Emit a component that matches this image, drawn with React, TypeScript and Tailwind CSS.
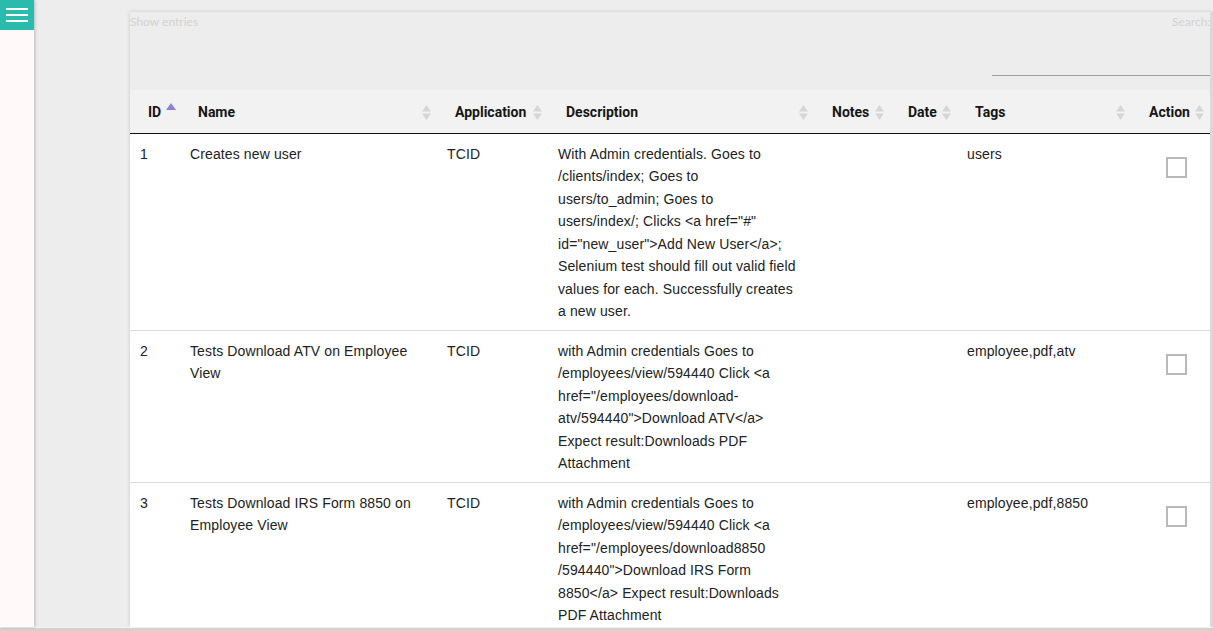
import React from "react";

type Row = {
  id: string;
  name: string[];
  app: string;
  desc: string[];
  tags: string;
};

const rows: Row[] = [
  {
    id: "1",
    name: ["Creates new user"],
    app: "TCID",
    desc: [
      "With Admin credentials. Goes to",
      "/clients/index; Goes to",
      "users/to_admin; Goes to",
      'users/index/; Clicks <a href="#"',
      'id="new_user">Add New User</a>;',
      "Selenium test should fill out valid field",
      "values for each. Successfully creates",
      "a new user.",
    ],
    tags: "users",
  },
  {
    id: "2",
    name: ["Tests Download ATV on Employee", "View"],
    app: "TCID",
    desc: [
      "with Admin credentials Goes to",
      "/employees/view/594440 Click <a",
      'href="/employees/download-',
      'atv/594440">Download ATV</a>',
      "Expect result:Downloads PDF",
      "Attachment",
    ],
    tags: "employee,pdf,atv",
  },
  {
    id: "3",
    name: ["Tests Download IRS Form 8850 on", "Employee View"],
    app: "TCID",
    desc: [
      "with Admin credentials Goes to",
      "/employees/view/594440 Click <a",
      'href="/employees/download8850',
      '/594440">Download IRS Form',
      "8850</a> Expect result:Downloads",
      "PDF Attachment",
    ],
    tags: "employee,pdf,8850",
  },
];

const SortBoth = () => (
  <svg
    width="9"
    height="15"
    viewBox="0 0 9 15"
    className="absolute right-[6px] top-[15px]"
  >
    <polygon points="4.5,0 9,6.5 0,6.5" fill="#d6d6d6" />
    <polygon points="0,8.5 9,8.5 4.5,15" fill="#d6d6d6" />
  </svg>
);

const SortAsc = () => (
  <svg
    width="10"
    height="7"
    viewBox="0 0 10 7"
    className="absolute right-[4px] top-[13px]"
  >
    <polygon points="5,0 10,7 0,7" fill="#8585e0" />
  </svg>
);

const headers: { label: string; asc?: boolean }[] = [
  { label: "ID", asc: true },
  { label: "Name" },
  { label: "Application" },
  { label: "Description" },
  { label: "Notes" },
  { label: "Date" },
  { label: "Tags" },
  { label: "Action" },
];

export default function App() {
  return (
    <div className="h-[631px] w-[1213px] overflow-hidden flex flex-col bg-[#ededed] font-['Liberation_Sans',Arial,sans-serif]">
      <div className="flex flex-1 min-h-0">
        <aside className="w-[34px] shrink-0 bg-[#fffaf9] shadow-[1px_0_3px_rgba(0,0,0,0.22)] z-10 flex flex-col">
          <div className="h-[30px] bg-[#2bbbad] flex items-center justify-center">
            <svg width="22" height="16" viewBox="0 0 22 16">
              <rect x="0" y="1" width="22" height="2" fill="#ffffff" />
              <rect x="0" y="7" width="22" height="2" fill="#ffffff" />
              <rect x="0" y="13" width="22" height="2" fill="#ffffff" />
            </svg>
          </div>
        </aside>
        <main className="flex-1 min-w-0 pl-[96px] pt-[12px] flex overflow-hidden">
          <div className="flex-1 min-w-0 bg-white border-r-[3px] border-[#d9d9d9] shadow-[0_0_4px_rgba(0,0,0,0.16)] overflow-hidden flex flex-col">
            <div className="h-[78px] shrink-0 bg-[#ededed] flex justify-between font-['Lato',sans-serif] text-[12px] text-[#d2d2d2]">
              <div className="leading-[18px] pt-[1px]">Show entries</div>
              <div className="w-[218px] flex flex-col">
                <div className="leading-[18px] pt-[1px] pl-[180px] whitespace-nowrap">
                  Search:
                </div>
                <div className="mt-[44px] h-[1px] bg-[#9e9e9e]" />
              </div>
            </div>
            <table className="table-fixed border-collapse w-full">
              <colgroup>
                <col className="w-[50px]" />
                <col className="w-[257px]" />
                <col className="w-[111px]" />
                <col className="w-[266px]" />
                <col className="w-[76px]" />
                <col className="w-[67px]" />
                <col className="w-[174px]" />
                <col />
              </colgroup>
              <thead>
                <tr className="h-[43px] bg-[#f2f2f2] border-b border-[#111111]">
                  {headers.map((h) => (
                    <th
                      key={h.label}
                      className="relative text-left pl-[18px] pr-0 pt-[2px] font-['Roboto',sans-serif] font-bold text-[14px] text-[#161616] whitespace-nowrap"
                    >
                      {h.label}
                      {h.asc ? <SortAsc /> : <SortBoth />}
                    </th>
                  ))}
                </tr>
              </thead>
              <tbody className="text-[14px] leading-[22.5px] tracking-[0.12px] text-[#222222]">
                {rows.map((r) => (
                  <tr key={r.id} className="border-b border-[#dddddd] align-top">
                    <td className="px-[10px] pt-[9px] pb-[7px]">{r.id}</td>
                    <td className="px-[10px] pt-[9px] pb-[7px]">
                      {r.name.map((l, i) => (
                        <div key={i} className="whitespace-nowrap">
                          {l}
                        </div>
                      ))}
                    </td>
                    <td className="px-[10px] pt-[9px] pb-[7px]">{r.app}</td>
                    <td className="px-[10px] pt-[9px] pb-[7px]">
                      {r.desc.map((l, i) => (
                        <div key={i} className="whitespace-nowrap">
                          {l}
                        </div>
                      ))}
                    </td>
                    <td className="px-[10px] pt-[9px] pb-[7px]"></td>
                    <td className="px-[10px] pt-[9px] pb-[7px]"></td>
                    <td className="px-[10px] pt-[9px] pb-[7px]">{r.tags}</td>
                    <td className="px-[10px] pt-[9px] pb-[7px]">
                      <div className="ml-[25px] mt-[14px] w-[21px] h-[21px] border-2 border-[#b9b9b9] bg-white" />
                    </td>
                  </tr>
                ))}
              </tbody>
            </table>
          </div>
        </main>
      </div>
      <div className="h-[4px] shrink-0 border-t border-[#f3f3f3] bg-[#d5d2cb]" />
    </div>
  );
}
